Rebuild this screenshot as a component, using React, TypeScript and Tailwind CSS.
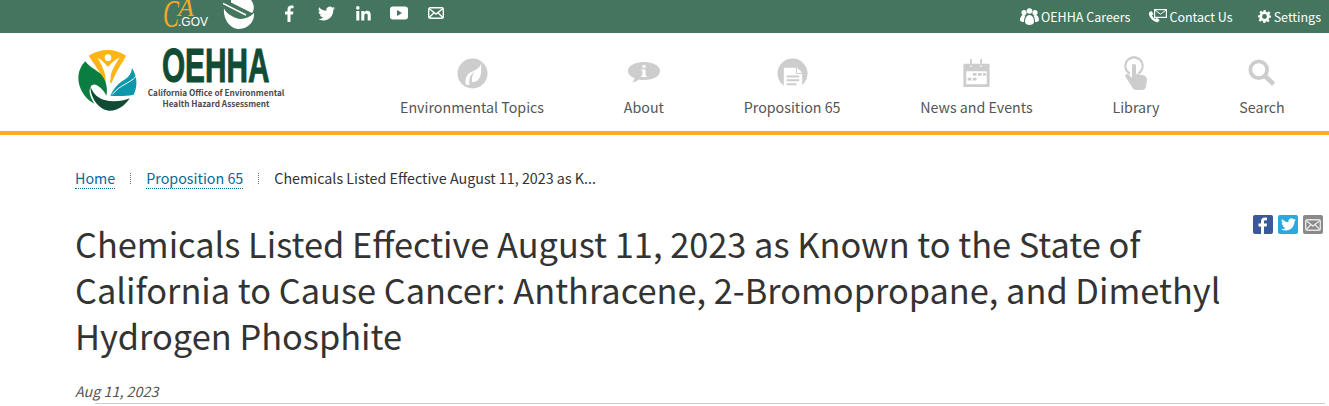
import { Fragment } from 'react';

const font = "font-['Noto_Sans_CJK_JP','Source_Sans_Pro',sans-serif]";

const Logo = () => (
  <svg width="64" height="65" viewBox="20 25 192 195">
    <path d="M55 48C90 25 135 25 167 48C155 72 135 98 124 130L102 130C92 98 70 72 55 48Z" fill="#fdb515" />
    <circle cx="113" cy="54" r="10" fill="#fff" />
    <path d="M82 55C93 60 103 70 110 80L116 80C123 70 134 60 148 53C140 68 127 85 122 103C120 120 119 135 119 150L107 150C107 135 106 120 104 103C98 85 90 68 82 55Z" fill="#fff" />
    <path d="M45 65C25 85 18 115 30 145C38 165 52 182 72 192C60 172 54 155 60 143C64 134 72 132 82 138C92 144 102 154 108 168C114 140 104 115 88 100C72 88 55 80 45 65Z" fill="#0a7d41" />
    <path d="M185 85C183 105 172 115 155 125C140 135 128 150 120 168C140 170 165 170 190 165C200 145 204 115 185 85Z" fill="#0d97ab" />
    <path d="M197 110C178 132 150 134 126 164" stroke="#fff" strokeWidth="3" fill="none" />
    <path d="M60 140C70 170 95 185 130 185C150 185 165 182 178 176C165 198 140 215 115 213C85 210 60 175 60 140Z" fill="#114b33" />
  </svg>
);

const CaGov = () => (
  <div className="relative h-[30px] w-[44px]">
    <span className="absolute left-0 top-[-6px] origin-left scale-x-[0.6] font-['Liberation_Serif',serif] text-[40px] italic leading-[40px] text-[#f9a91f]">C</span>
    <span className="absolute left-[15px] top-[-5px] font-['Liberation_Serif',serif] text-[26px] italic leading-[26px] text-[#f9a91f]">A</span>
    <span className="absolute left-[15px] top-[15px] font-['Liberation_Sans',sans-serif] text-[12px] leading-[14px] text-white">.GOV</span>
  </div>
);

const Globe = () => (
  <svg width="32" height="29" viewBox="0 0 32 29" fill="#fff">
    <path d="M8 0H28C31 4 32 9 29 13L8 2.500Z" />
    <path d="M0 3.500L23 15" stroke="#fff" strokeWidth="1.500" />
    <path d="M1 8.500C3 13 8 16 13 18C18 20 25 19 31 13C32 20 26 29 16 29C7 29 0 19 1 8.500Z" />
  </svg>
);

const Facebook = () => (
  <svg width="12" height="17" viewBox="0 0 12 17" fill="#fff"><path d="M3.500 17V9.400H1V6.600h2.500V4.500C3.500 2 5 .6 7.300.6c1.100 0 2 .1 2.300.1v2.600H8c-1.200 0-1.500.6-1.500 1.500v1.800h2.900l-.4 2.800H6.500V17z" /></svg>
);

const Twitter = ({ size = 17 }: { size?: number }) => (
  <svg width={size} height={size} viewBox="0 0 24 24" fill="#fff">
    <path d="M23.950 4.570a10 10 0 0 1-2.820.770 4.960 4.960 0 0 0 2.160-2.720 9.900 9.900 0 0 1-3.120 1.180 4.920 4.920 0 0 0-8.380 4.480C7.690 8.100 4.070 6.130 1.640 3.160a4.820 4.820 0 0 0-.660 2.470c0 1.710.870 3.210 2.190 4.100a4.900 4.900 0 0 1-2.230-.620v.060a4.920 4.920 0 0 0 3.950 4.830 5 5 0 0 1-2.210.080 4.940 4.940 0 0 0 4.600 3.420A9.870 9.870 0 0 1 0 19.540a14 14 0 0 0 7.560 2.210c9.050 0 14-7.500 14-13.980 0-.210 0-.420-.020-.630a9.940 9.940 0 0 0 2.410-2.570z" />
  </svg>
);

const LinkedIn = () => (
  <svg width="15" height="15" viewBox="0 0 15 15" fill="#fff">
    <circle cx="1.800" cy="1.900" r="1.800" />
    <rect x="0.300" y="5" width="3" height="9.500" />
    <path d="M5.300 5h2.900v1.400C8.700 5.500 9.800 4.800 11.200 4.800c2.800 0 3.500 1.800 3.500 4.400v5.300h-3V9.800c0-1.200-.2-2.300-1.500-2.300s-1.900 1-1.900 2.300v4.700h-3z" />
  </svg>
);

const YouTube = () => (
  <svg width="18" height="14" viewBox="0 0 18 14">
    <rect width="18" height="13" y="0.500" rx="3" fill="#fff" />
    <path d="M7 4l5 3-5 3z" fill="#44765f" />
  </svg>
);

const MailLine = ({ stroke = '#fff' }: { stroke?: string }) => (
  <svg width="16" height="12" viewBox="0 0 16 12" fill="none" stroke={stroke} strokeWidth="1.400">
    <rect x="0.700" y="0.700" width="14.600" height="10.600" rx="1.500" />
    <path d="M1 1.500l7 5.500 7-5.500M1 10.800l5-5M15 10.800l-5-5" />
  </svg>
);

const People = () => (
  <svg width="19" height="17" viewBox="0 0 19 17" fill="#fff">
    <circle cx="4" cy="4.500" r="2.600" />
    <circle cx="9.500" cy="3" r="2.800" />
    <circle cx="15" cy="4.500" r="2.600" />
    <path d="M0 12c0-3 1.500-5 3.500-5 1 0 1.500.4 2 .8C4.500 9.500 4 11.500 4 14 2 14 0 13.500 0 12zM15 14c0-2.500-.5-4.500-1.500-6.200.5-.4 1-.8 2-.8 2 0 3.500 2 3.500 5 0 1.500-2 2-4 2z" />
    <path d="M5 14c0-4 1.700-7 4.500-7s4.500 3 4.500 7c0 2-2.500 3-4.500 3S5 16 5 14z" />
  </svg>
);

const PhoneMail = () => (
  <svg width="19" height="15" viewBox="0 0 19 15" fill="#fff">
    <path d="M1 3.500l2.500-1.500 2 3-1.500 1.300c.5 1.500 2 3 3.500 3.700l1.300-1.300 2.800 2.200-1.600 2.300C6 13.500 0 8 1 3.500z" />
    <rect x="6.600" y="0.600" width="11.800" height="7.800" fill="#44765f" stroke="#fff" strokeWidth="1.200" />
    <path d="M7 1.200l5.500 4 5.500-4" fill="none" stroke="#fff" strokeWidth="1" />
  </svg>
);

const Gear = () => (
  <svg width="13" height="13" viewBox="0 0 24 24" fill="#fff">
    <path fillRule="evenodd" d="M10 0h4l.7 3.400 2.300 1 3-1.900 2.800 2.800-1.900 3 1 2.300L24 10v4l-3.400.7-1 2.300 1.900 3-2.800 2.800-3-1.900-2.300 1L14 24h-4l-.7-3.400-2.300-1-3 1.900-2.800-2.800 1.900-3-1-2.300L0 14v-4l3.400-.7 1-2.300-1.900-3 2.800-2.800 3 1.900 2.300-1zM12 7.500a4.500 4.500 0 1 0 0 9 4.500 4.500 0 0 0 0-9z" />
  </svg>
);

const NavIcons = {
  leaf: (
    <svg width="31" height="31" viewBox="0 0 32 32">
      <circle cx="16" cy="16" r="15.500" fill="#cdcdcd" />
      <path d="M25 5c-1 5-5 7-9 9-5 2-8 6-7 13 1 1 3 1 4 0-1-5 0-9 5-13-3 5-3 9-2 11 5 0 8-4 9-10 0-4 0-7 0-10z" fill="#fff" />
    </svg>
  ),
  info: (
    <svg width="32" height="32" viewBox="0 0 32 32">
      <path d="M16 5c9 0 16 3.500 16 9s-7 9-16 9c-2 0-3 0-5-.5-2 1.500-4 2.500-7 3 1.500-1.500 2.300-3 2.500-4.500C2.500 19.500 0 17 0 14 0 8.500 7 5 16 5z" fill="#cdcdcd" />
      <circle cx="16" cy="9.500" r="1.800" fill="#fff" />
      <path d="M13.500 12.500h4v6h1.200v1.500h-5.500v-1.500h1.200v-4.500h-0.900z" fill="#fff" />
    </svg>
  ),
  doc: (
    <svg width="31" height="31" viewBox="0 0 32 32">
      <circle cx="16" cy="16" r="15.500" fill="#cdcdcd" />
      <path d="M7 10h12l7 6v16H7z" fill="#fff" />
      <path d="M20 9.500l6 5.500h-6z" fill="#fff" />
      <path d="M20 10v6h6" fill="none" stroke="#cdcdcd" strokeWidth="1" />
      <path d="M10 19h13M10 23h13M10 27h10" stroke="#cdcdcd" strokeWidth="2" />
    </svg>
  ),
  calendar: (
    <svg width="27" height="28" viewBox="0 0 28 30" fill="#cdcdcd">
      <path fillRule="evenodd" d="M0 5h7v3h2V5h9v3h2V5h8v25H0zM3 13v14h22V13z" />
      <path d="M7 0h2v7H7zM18 0h2v7h-2z" />
      <path d="M10 15h4v3h-4zM15.500 15h4v3h-4zM21 15h3v3h-3zM4.500 20h4v3h-4zM10 20h4v3h-4z" />
    </svg>
  ),
  pointer: (
    <svg width="24" height="34" viewBox="0 0 24 34" fill="#cdcdcd">
      <path fillRule="evenodd" d="M10 0a10 10 0 0 1 4 19v-2.500a7.600 7.600 0 1 0-8 0V19A10 10 0 0 1 10 0z" />
      <path d="M8 9c1-1.500 3-1.500 4 0v9l6 1c3 .5 5 2 5 5l-1 6c-.5 3-2 4-4 4h-6c-2 0-3-1-4-3L1 20l1-2h2l4 4z" />
    </svg>
  ),
  search: (
    <svg width="28" height="28" viewBox="0 0 30 30" fill="none" stroke="#cdcdcd">
      <circle cx="11.500" cy="11.500" r="9" strokeWidth="4" />
      <path d="M18.500 18.500L27.500 27" strokeWidth="5" />
    </svg>
  ),
};

const navItems = [
  { label: 'Environmental Topics', icon: NavIcons.leaf },
  { label: 'About', icon: NavIcons.info },
  { label: 'Proposition 65', icon: NavIcons.doc },
  { label: 'News and Events', icon: NavIcons.calendar },
  { label: 'Library', icon: NavIcons.pointer },
  { label: 'Search', icon: NavIcons.search },
];

const App = () => {
  return (
    <div className={`${font} h-[406px] overflow-hidden bg-white text-[#333]`}>
      <header>
        <div className="flex h-[33px] items-start justify-between overflow-hidden bg-[#44765f] text-white">
          <div className="flex items-start pl-[163px]">
            <CaGov />
            <div className="ml-[16px]"><Globe /></div>
            <div className="ml-[29px] flex h-[26px] items-center">
              <Facebook />
              <div className="ml-[22px]"><Twitter /></div>
              <div className="ml-[21px]"><LinkedIn /></div>
              <div className="ml-[19px]"><YouTube /></div>
              <div className="ml-[20px]"><MailLine /></div>
            </div>
          </div>
          <div className="flex h-[33px] items-center pr-[8px] text-[12.500px] leading-[20px]">
            <People />
            <span className="ml-[2px]">OEHHA Careers</span>
            <div className="ml-[18px]"><PhoneMail /></div>
            <span className="ml-[2px]">Contact Us</span>
            <div className="ml-[25px]"><Gear /></div>
            <span className="ml-[3px]">Settings</span>
          </div>
        </div>
        <div className="flex h-[102px] border-b-[4px] border-[#fbad23] pl-[77px]">
          <div className="mt-[15px] flex w-[323px] items-start">
            <Logo />
            <div className="ml-[7px] flex w-[136px] flex-col items-center">
              <span className="mt-[-3px] origin-top scale-x-[0.62] font-['Liberation_Sans',sans-serif] text-[48px] font-bold leading-[42px] text-[#114b33] [-webkit-text-stroke:1px_#114b33]">OEHHA</span>
              <span className="whitespace-nowrap text-center text-[8.200px] font-bold leading-[11px] text-[#4a4a4a]">California Office of Environmental<br />Health Hazard Assessment</span>
            </div>
          </div>
          <nav className="flex items-start gap-[79.800px] pt-[21px]">
            {navItems.map((item) => (
              <a key={item.label} className="flex flex-col items-center">
                <div className="flex h-[38px] items-center justify-center">{item.icon}</div>
                <span className="mt-[3px] whitespace-nowrap text-[14.250px] leading-[24px] text-[#555]">{item.label}</span>
              </a>
            ))}
          </nav>
        </div>
      </header>
      <main className="px-[75px]">
        <div className="flex items-center pt-[31px] text-[14.300px] leading-[24px]">
          {['Home', 'Proposition 65'].map((crumb) => (
            <Fragment key={crumb}>
              <a className="border-b border-dotted border-[#046b99] leading-[20px] text-[#046b99]">{crumb}</a>
              <span className="mx-[15px] h-[11px] border-l border-dotted border-[#777]" />
            </Fragment>
          ))}
          <span className="text-[#333]">Chemicals Listed Effective August 11, 2023 as K...</span>
        </div>
        <div className="relative pt-[30px]">
          <div className="absolute right-[-69px] top-[25px] flex gap-[5px]">
            <div className="flex h-[19px] w-[20px] items-end justify-center overflow-hidden rounded-[2px] bg-[#3b5998]">
              <svg width="10" height="17" viewBox="0 0 10 17" fill="#fff"><path d="M3 17V9.500H.5V6.500H3V4.500C3 2 4.500.5 6.800.5c1 0 2 .1 2.200.2v2.600H7.500C6.300 3.300 6 3.900 6 4.800v1.700h3l-.4 3H6V17z" /></svg>
            </div>
            <div className="flex h-[19px] w-[20px] items-center justify-center rounded-[2px] bg-[#2aa9e0]">
              <Twitter size={15} />
            </div>
            <div className="flex h-[19px] w-[20px] items-center justify-center rounded-[2px] bg-[#8a8a8a]">
              <MailLine stroke="#e5e5e5" />
            </div>
          </div>
          <h1 className="w-[1150px] text-[34.370px] font-normal leading-[46px] text-[#333]">
            Chemicals Listed Effective August 11, 2023 as Known to the State of California to Cause Cancer: Anthracene, 2-Bromopropane, and Dimethyl Hydrogen Phosphite
          </h1>
        </div>
        <div className="mt-[21px] text-[14.300px] italic leading-[24px] text-[#555]">Aug 11, 2023</div>
        <div className="ml-[20px] mr-[-71px] h-px bg-[#ccc]" />
      </main>
    </div>
  );
};

export default App;
